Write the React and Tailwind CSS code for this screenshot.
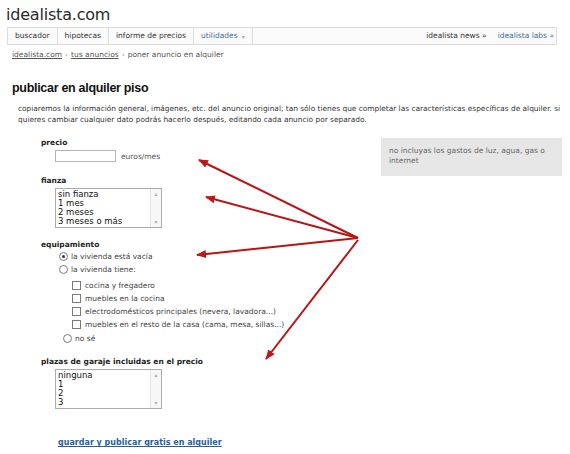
import React from "react";

const navLeft = [
  { label: "buscador" },
  { label: "hipotecas" },
  { label: "informe de precios" },
  { label: "utilidades", blue: true, caret: true },
];

function ListBox({ items }) {
  return (
    <div className="ml-[14px] flex h-[40px] w-[107px] border border-[#a5acb2] bg-white">
      <div className="flex-1 overflow-hidden pl-[2px] pt-[1px] font-['DejaVu_Sans',sans-serif] text-[8.5px] leading-[9px] text-[#111]">
        {items.map((it) => (
          <div key={it}>{it}</div>
        ))}
      </div>
      <div className="flex w-[11px] flex-col items-center justify-between border-l border-[#e4e4e4] bg-[#f7f7f7] py-[2px] text-[6px] leading-none text-[#b0b0b0]">
        <span>▴</span>
        <span>▾</span>
      </div>
    </div>
  );
}

function Radio({ checked }) {
  return (
    <span className="flex h-[9px] w-[9px] items-center justify-center rounded-full border border-[#7a7a7a] bg-white">
      {checked && <span className="h-[3px] w-[3px] rounded-full bg-[#333]" />}
    </span>
  );
}

function Check() {
  return <span className="h-[9px] w-[9px] border border-[#7a7a7a] bg-white" />;
}

function Label({ children }) {
  return (
    <div className="font-['DejaVu_Sans',sans-serif] text-[7.5px] font-bold leading-[10px] text-[#222]">
      {children}
    </div>
  );
}

export default function App() {
  const small = "font-['DejaVu_Sans',sans-serif] text-[7.5px] text-[#444]";
  return (
    <div className="relative h-[454px] w-[570px] overflow-hidden bg-white font-['DejaVu_Sans',sans-serif]">
      {/* logo */}
      <div className="pl-[6px] pt-[3px] text-[16px] leading-[23px] tracking-[-0.2px] text-[#2a2a2a]">
        idealista.com
      </div>

      {/* nav */}
      <div className="mx-[7px] mt-[1px] flex h-[18px] w-[550px] items-center border border-[#dcdcdc] bg-[#fafafa] text-[7.5px] text-[#333]">
        {navLeft.map((n) => (
          <div
            key={n.label}
            className={`flex h-full items-center border-r border-[#dcdcdc] px-[7px] ${n.blue ? "text-[#3a6ea5]" : ""}`}
          >
            {n.label}
            {n.caret && <span className="ml-[4px] text-[6px] text-[#aaa]">▾</span>}
          </div>
        ))}
        <div className="flex-1" />
        <div className="pr-[11px]">idealista news »</div>
        <div className="pr-[2px] text-[#3a6ea5]">idealista labs »</div>
      </div>

      {/* breadcrumb */}
      <div className="mt-[4px] flex items-center gap-[3px] pl-[12px] text-[7.5px] text-[#555]">
        <span className="underline">idealista.com</span>
        <span className="text-[#999]">›</span>
        <span className="underline">tus anuncios</span>
        <span className="text-[#999]">›</span>
        <span>poner anuncio en alquiler</span>
      </div>

      {/* title */}
      <h1 className="mt-[20px] pl-[12px] font-['Liberation_Sans',sans-serif] text-[12.5px] font-bold leading-[16px] tracking-[-0.3px] text-[#111]">
        publicar en alquiler piso
      </h1>

      <p className="mt-[7px] w-[570px] pl-[18px] pr-[8px] font-['DejaVu_Sans',sans-serif] text-[7.4px] leading-[11px] text-[#333]">
        copiaremos la información general, imágenes, etc. del anuncio original; tan sólo tienes que completar las características específicas de alquiler. si quieres cambiar cualquier dato podrás hacerlo después, editando cada anuncio por separado.
      </p>

      <div className="mt-[13px] flex">
        {/* form */}
        <div className="w-[340px] pl-[41px]">
          <Label>precio</Label>
          <div className="mt-[2px] flex items-center">
            <div className="ml-[14px] h-[12px] w-[61px] border border-[#b5b5b5] bg-white" />
            <span className={`ml-[5px] ${small} text-[#555]`}>euros/mes</span>
          </div>

          <div className="mt-[14px]">
            <Label>fianza</Label>
          </div>
          <div className="mt-[2px]">
            <ListBox items={["sin fianza", "1 mes", "2 meses", "3 meses o más"]} />
          </div>

          <div className="mt-[12px]">
            <Label>equipamiento</Label>
          </div>
          <div className={`mt-[1px] flex flex-col gap-[3px] ${small} text-[#444]`}>
            <div className="ml-[18px] flex h-[10px] items-center gap-[3px]">
              <Radio checked />
              <span>la vivienda está vacía</span>
            </div>
            <div className="ml-[18px] flex h-[10px] items-center gap-[3px]">
              <Radio />
              <span>la vivienda tiene:</span>
            </div>
            <div className="ml-[31px] mt-[3px] flex flex-col gap-[3px]">
              {[
                "cocina y fregadero",
                "muebles en la cocina",
                "electrodomésticos principales (nevera, lavadora...)",
                "muebles en el resto de la casa (cama, mesa, sillas...)",
              ].map((t) => (
                <div key={t} className="flex h-[10px] items-center gap-[4px]">
                  <Check />
                  <span>{t}</span>
                </div>
              ))}
            </div>
            <div className="ml-[22px] mt-[1px] flex h-[10px] items-center gap-[3px]">
              <Radio />
              <span>no sé</span>
            </div>
          </div>

          <div className="mt-[14px]">
            <Label>plazas de garaje incluidas en el precio</Label>
          </div>
          <div className="mt-[2px]">
            <ListBox items={["ninguna", "1", "2", "3"]} />
          </div>

          <a className="ml-[17px] mt-[28px] block font-['DejaVu_Sans',sans-serif] text-[8px] font-bold text-[#2a5f9e] underline">
            guardar y publicar gratis en alquiler
          </a>
        </div>

        {/* hint */}
        <div className="ml-[41px] h-[38px] w-[181px] bg-[#e6e6e6] px-[8px] pt-[8px] text-[7.5px] leading-[10px] text-[#666]">
          no incluyas los gastos de luz, agua, gas o internet
        </div>
      </div>

      {/* arrows overlay */}
      <svg className="pointer-events-none absolute left-0 top-0" width="570" height="454">
        <defs>
          <marker id="ah" markerWidth="10" markerHeight="8" refX="9" refY="4" orient="auto" markerUnits="userSpaceOnUse">
            <path d="M0,0 L10,4 L0,8 z" fill="#c41414" />
          </marker>
        </defs>
        <g stroke="#b81414" strokeWidth="2" fill="none" markerEnd="url(#ah)">
          <line x1="358" y1="238" x2="199" y2="160" />
          <line x1="358" y1="238" x2="206" y2="197" />
          <line x1="358" y1="238" x2="197" y2="255" />
          <line x1="358" y1="240" x2="266" y2="359" />
        </g>
      </svg>
    </div>
  );
}
